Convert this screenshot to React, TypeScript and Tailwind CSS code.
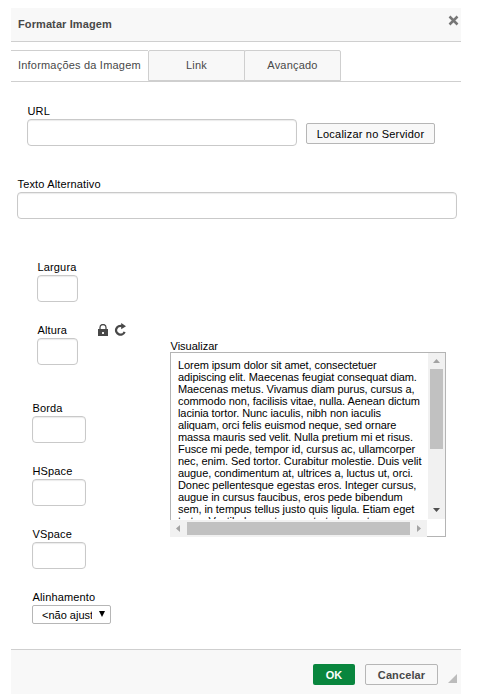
import React from "react";

const inputBase =
  "block h-[27px] rounded-[4px] border border-[#c9c9c9] bg-white shadow-[inset_0_1px_1px_rgba(0,0,0,0.08)] outline-none";

function Field({ label, inputClass }: { label: string; inputClass: string }) {
  return (
    <label className="block">
      <span className="block h-4 pl-[0.5px] leading-4 tracking-[0.15px] whitespace-nowrap">{label}</span>
      <input className={`${inputBase} ${inputClass}`} />
    </label>
  );
}

const previewLines = [
  "Lorem ipsum dolor sit amet, consectetuer",
  "adipiscing elit. Maecenas feugiat consequat diam.",
  "Maecenas metus. Vivamus diam purus, cursus a,",
  "commodo non, facilisis vitae, nulla. Aenean dictum",
  "lacinia tortor. Nunc iaculis, nibh non iaculis",
  "aliquam, orci felis euismod neque, sed ornare",
  "massa mauris sed velit. Nulla pretium mi et risus.",
  "Fusce mi pede, tempor id, cursus ac, ullamcorper",
  "nec, enim. Sed tortor. Curabitur molestie. Duis velit",
  "augue, condimentum at, ultrices a, luctus ut, orci.",
  "Donec pellentesque egestas eros. Integer cursus,",
  "augue in cursus faucibus, eros pede bibendum",
  "sem, in tempus tellus justo quis ligula. Etiam eget",
  "tortor. Vestibulum rutrum, est ut placerat",
];

function Preview() {
  return (
    <div className="h-[185px] w-[276px] border border-[#b4b4b4] bg-white">
      <div className="flex h-[166px]">
        <div className="w-[257px] overflow-hidden pt-[6px] pl-[7px] leading-[12px] tracking-[-0.08px]">
          {previewLines.map((line) => (
            <div key={line} className="h-3 whitespace-nowrap">{line}</div>
          ))}
        </div>
        <div className="flex w-[17px] shrink-0 flex-col items-center bg-[#f1f1f1]">
          <svg className="h-4 w-[17px] shrink-0" viewBox="0 0 17 16">
            <path d="M5 10h7L8.500 6z" fill="#a3a3a3" />
          </svg>
          <div className="h-20 w-[13px] bg-[#c1c1c1]" />
          <svg className="mt-auto h-[17px] w-[17px] shrink-0" viewBox="0 0 17 17">
            <path d="M5 6h7L8.500 10z" fill="#505050" />
          </svg>
        </div>
      </div>
      <div className="mt-px -ml-px flex h-[17px] w-[257px] items-center bg-[#f1f1f1]">
        <svg className="h-[17px] w-[17px] shrink-0" viewBox="0 0 17 17">
          <path d="M10 5v7L6 8.500z" fill="#a3a3a3" />
        </svg>
        <div className="h-[13px] w-[223px] bg-[#c1c1c1]" />
        <svg className="h-[17px] w-[17px] shrink-0" viewBox="0 0 17 17">
          <path d="M7 5v7L11 8.500z" fill="#a3a3a3" />
        </svg>
      </div>
    </div>
  );
}

export default function App() {
  return (
    <div className="h-[697px] w-[477px] overflow-hidden bg-white pt-2 pl-[11px] font-['Liberation_Sans',Arial,sans-serif] text-[11px] text-black">
      <div className="flex h-[686px] w-[450px] flex-col">
        <header className="flex h-[34px] shrink-0 justify-between border-b border-[#cfcfcf] bg-[#f8f8f8] pl-[7px]">
          <h1 className="text-[11px] leading-8 font-bold tracking-[0.1px] text-[#484848]">Formatar Imagem</h1>
          <svg className="mt-[7px] mr-[2px] h-[11px] w-[11px]" viewBox="0 0 11 11">
            <path d="M1.500 1.500l8 8M9.500 1.500l-8 8" stroke="#777" strokeWidth="2.500" />
          </svg>
        </header>

        <nav className="mt-2 flex h-8 shrink-0 border-b border-[#cfcfcf] leading-[29px] tracking-[0.2px] text-[#484848]">
          <div className="w-[137px] border-t border-[#cfcfcf] pl-[7px] whitespace-nowrap">Informações da Imagem</div>
          <div className="w-[97px] rounded-tl-[2px] border border-[#cfcfcf] bg-[#f8f8f8] text-center">Link</div>
          <div className="-ml-px w-[97px] rounded-t-[2px] border border-[#cfcfcf] bg-[#f8f8f8] text-center">Avançado</div>
        </nav>

        <main className="flex h-[567px] shrink-0 flex-col pt-[21px]">
          <div className="flex h-[73px] gap-[9px] pl-4">
            <Field label="URL" inputClass="w-[270px]" />
            <button className="mt-5 h-[21px] w-[129px] rounded-[2px] border border-[#b6b6b6] bg-[#f8f8f8] leading-[20px] tracking-[0.2px] whitespace-nowrap">Localizar no Servidor</button>
          </div>
          <div className="h-[83px] pl-[6px]">
            <Field label="Texto Alternativo" inputClass="w-[440px]" />
          </div>
          <div className="flex">
            <div className="w-[159px] pl-[21px]">
              <div className="h-[63px] pl-[5px]">
                <Field label="Largura" inputClass="w-[41px]" />
              </div>
              <div className="flex h-[78px] pl-[5px]">
                <div className="w-[61px]"><Field label="Altura" inputClass="w-[41px]" /></div>
                <svg className="mt-[2px] h-[12px] w-[10px]" viewBox="0 0 10 12">
                  <path d="M2 5V3.500a3 3 0 0 1 6 0V5" fill="none" stroke="#484848" strokeWidth="1.300" />
                  <path d="M0 5h10v7H0z" fill="#484848" />
                  <path d="M4 8h2v2H4z" fill="#eee" />
                </svg>
                <svg className="mt-[1px] ml-[6px] h-[13px] w-[13px]" viewBox="0 0 13 13">
                  <path d="M10.600 8.800A4.400 4.400 0 1 1 8 3.100" fill="none" stroke="#484848" strokeWidth="2.300" />
                  <path d="M7.200 0l4.800 3.200L7.200 6.200z" fill="#484848" />
                </svg>
              </div>
              <div className="h-[63px]"><Field label="Borda" inputClass="w-[54px]" /></div>
              <div className="h-[63px]"><Field label="HSpace" inputClass="w-[54px]" /></div>
              <div className="h-[63px]"><Field label="VSpace" inputClass="w-[54px]" /></div>
              <div>
                <div className="h-4 pl-[0.5px] leading-4 tracking-[0.15px]">Alinhamento</div>
                <div className="flex h-[19px] w-[79px] items-center justify-between rounded-[2px] border border-[#b6b6b6] bg-white pr-[5px] pl-[9px]">
                  <span className="block w-[50px] overflow-hidden pt-px leading-[17px] whitespace-nowrap">&lt;não ajustado&gt;</span>
                  <svg className="-mt-[2px] h-[6px] w-[6px]" viewBox="0 0 6 6"><path d="M0 0h6L3 6z" /></svg>
                </div>
              </div>
            </div>
            <div className="mt-[79px]">
              <div className="h-[14px] pl-[0.5px] leading-[17px]">Visualizar</div>
              <Preview />
            </div>
          </div>
        </main>

        <footer className="flex h-[45px] shrink-0 items-start justify-end border-t border-[#cfcfcf] bg-[#f8f8f8] pt-[14px] pr-1 text-[11px] font-bold">
          <button className="h-[21px] w-[42px] rounded-[2px] bg-[#09863e] leading-[22px] text-white">OK</button>
          <button className="ml-[10px] h-[21px] w-[73px] rounded-[2px] border border-[#b6b6b6] bg-[#f8f8f8] leading-[20px] tracking-[0.1px] text-[#484848]">Cancelar</button>
          <svg className="mt-[10px] ml-[10px] h-[9px] w-[9px]" viewBox="0 0 9 9"><path d="M9 0v9H0z" fill="#bcbcbc" /></svg>
        </footer>
      </div>
    </div>
  );
}
